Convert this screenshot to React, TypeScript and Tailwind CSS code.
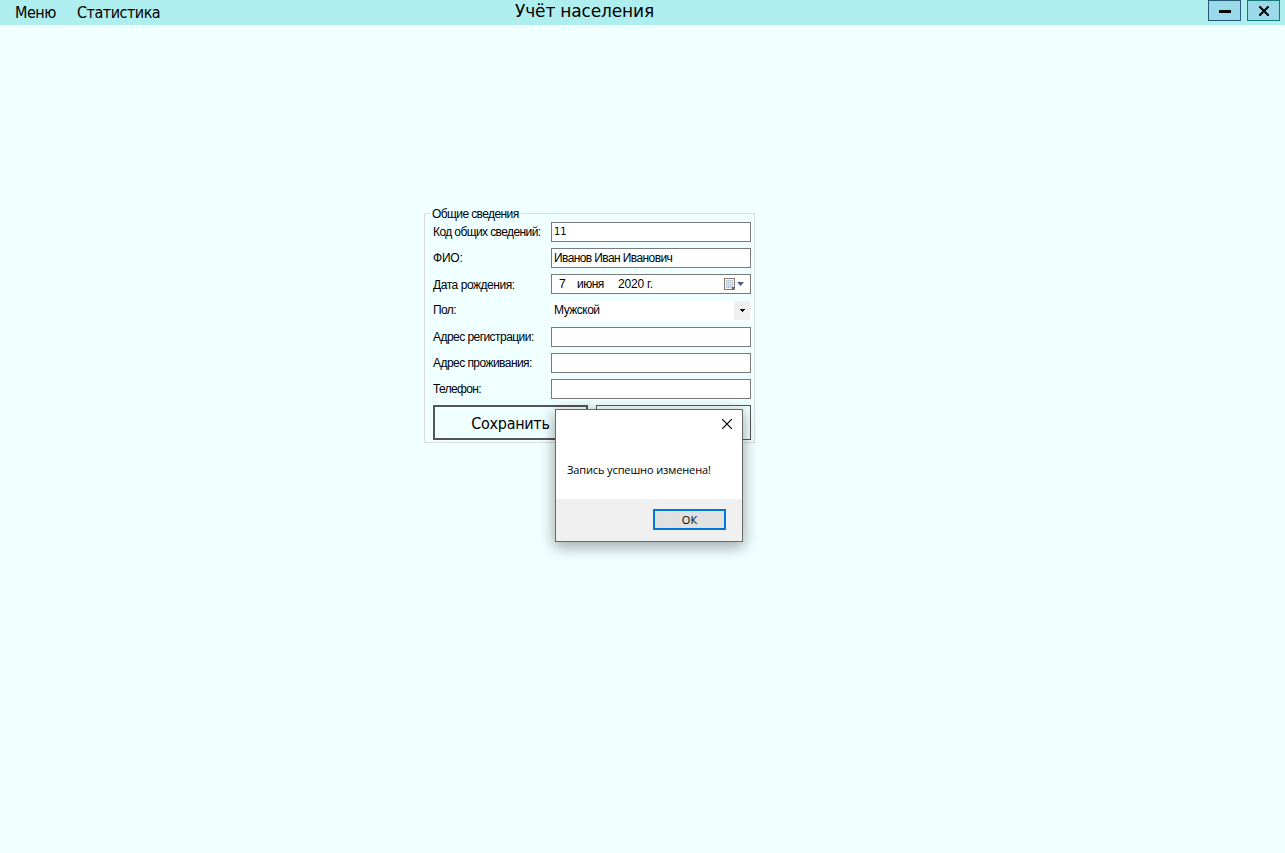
import type { ReactNode } from "react";

function Field({ label, labelClass, children }: { label: string; labelClass: string; children: ReactNode }) {
  return (
    <div className="flex h-[26px] items-center">
      <label className="flex w-[118px] shrink-0 whitespace-nowrap leading-[14px]">
        <span className={labelClass}>{label}</span>
      </label>
      {children}
    </div>
  );
}

function TextBox({ value = "", className = "" }: { value?: string; className?: string }) {
  return (
    <div className="flex h-5 w-[200px] items-center border border-[#7a7a7a] bg-white pl-[2px] leading-[14px] whitespace-nowrap">
      <span className={className}>{value}</span>
    </div>
  );
}

function CalendarIcon() {
  return (
    <svg width="12" height="13" viewBox="0 0 12 13" shapeRendering="crispEdges">
      <path d="M0 0h11v12H0z" fill="#857c79" />
      <path d="M1 1h9v10H1z" fill="#f6f6f6" />
      <path d="M2 2h7v8H2z" fill="#b4c0cc" />
      <path d="M2 3.5h7M2 5.5h7M2 7.5h7M3.5 2v8M5.5 2v8M7.5 2v8" stroke="#eef1f4" strokeWidth=".6" shapeRendering="auto" />
      <path d="M8 9h3v1h-1v1H9v1H8z" fill="#65605e" />
    </svg>
  );
}

function MessageDialog() {
  return (
    <div className="absolute left-[555px] top-[409px] flex h-[133px] w-[188px] flex-col border border-[#65696a] bg-white font-['Open_Sans',sans-serif] text-[11px] shadow-[0_4px_14px_1px_rgba(0,0,0,0.34)]">
      <div className="flex h-[29px] justify-end pr-[10px] pt-[9px]">
        <svg width="10" height="10" viewBox="0 0 10 10">
          <path d="M0 0l10 10M10 0L0 10" stroke="#000" strokeWidth="1.2" />
        </svg>
      </div>
      <div className="flex-1 pl-[11px] pt-[24px] leading-[14px] whitespace-nowrap">
        <span className="tracking-[-0.12px]">Запись успешно изменена!</span>
      </div>
      <div className="flex h-[42px] justify-end bg-[#f0f0f0] pr-4 pt-[10px]">
        <button className="h-[21px] w-[73px] border-2 border-[#0078d7] bg-[#e1e1e1] text-center leading-[17px]">ОК</button>
      </div>
    </div>
  );
}

export default function App() {
  return (
    <div className="relative h-[853px] w-[1285px] overflow-hidden bg-[#f0ffff] font-['Liberation_Sans',sans-serif] text-[12px] text-black">
      <header className="flex h-[25px] justify-between bg-[#afeeee]">
        <nav className="flex w-[515px] pl-[15px] pt-[3px] font-['DejaVu_Sans_Condensed','DejaVu_Sans',sans-serif] text-[16px] leading-5">
          <span className="w-[62px] tracking-[-0.5px]">Меню</span>
          <span className="tracking-[-0.5px]">Статистика</span>
        </nav>
        <h1 className="flex-1 whitespace-nowrap pt-px font-['DejaVu_Sans',sans-serif] text-[17px] leading-[21px] tracking-[-0.16px]">Учёт населения</h1>
        <div className="flex gap-[6px] pr-[5px]">
          <button className="flex h-[21px] w-[33px] items-start border border-[#285a78] bg-[#99d9ea] pl-[10px] pt-[9px]">
            <svg width="12" height="3" viewBox="0 0 12 3"><path d="M0 0h12v3H0z" /></svg>
          </button>
          <button className="flex h-[21px] w-[33px] items-start border border-[#147878] bg-[#99d9ea] pl-[11px] pt-[5px]">
            <svg width="10" height="10" viewBox="0 0 10 10"><path d="M1 1l8 8M9 1L1 9" stroke="#000" strokeWidth="2" strokeLinecap="square" /></svg>
          </button>
        </div>
      </header>

      <main className="flex justify-start pl-[424px] pt-[188px]">
        <section className="relative h-[230px] w-[331px] border border-[#dcdcdc] pl-2 pt-[5px]">
          <h2 className="absolute -top-[7px] left-[5px] bg-[#f0ffff] px-[2px] leading-[14px] tracking-[-0.6px] whitespace-nowrap">Общие сведения</h2>
          <Field label="Код общих сведений:" labelClass="tracking-[-0.6px]"><TextBox value="11" className="font-['DejaVu_Sans_Condensed','DejaVu_Sans',sans-serif] text-[11px]" /></Field>
          <Field label="ФИО:" labelClass="tracking-[-0.2px]"><TextBox value="Иванов Иван Иванович" className="tracking-[-0.6px]" /></Field>
          <Field label="Дата рождения:" labelClass="pt-[2px] tracking-[-0.45px]">
            <div className="flex h-5 w-[200px] items-center border border-[#7a7a7a] bg-white pl-[7px] pr-[6px] leading-[14px]">
              <span className="w-[18px]">7</span>
              <span className="w-[41px] tracking-[-0.5px]">июня</span>
              <span className="whitespace-nowrap tracking-[-0.2px]">2020 г.</span>
              <span className="ml-auto flex items-center gap-[1px]">
                <CalendarIcon />
                <svg width="7" height="4" viewBox="0 0 7 4"><path d="M0 0h7L3.5 4z" fill="#475d83" /></svg>
              </span>
            </div>
          </Field>
          <div className="mb-px">
            <Field label="Пол:" labelClass="tracking-[-0.6px]">
              <div className="mt-px flex h-5 w-[200px] items-center justify-between bg-white pl-[3px] pr-px leading-[14px]">
                <span className="-mt-px tracking-[-0.5px]">Мужской</span>
                <span className="flex h-[19px] w-4 items-center justify-center bg-[#f0f0f0]">
                  <svg width="5" height="3" viewBox="0 0 5 3" shapeRendering="crispEdges"><path d="M0 0h5v1H4v1H3v1H2V2H1V1H0z" /></svg>
                </span>
              </div>
            </Field>
          </div>
          <Field label="Адрес регистрации:" labelClass="tracking-[-0.55px]"><TextBox /></Field>
          <Field label="Адрес проживания:" labelClass="tracking-[-0.55px]"><TextBox /></Field>
          <Field label="Телефон:" labelClass="tracking-[-0.65px]"><TextBox /></Field>
          <div className="mt-[3px] flex gap-2">
            <button className="h-[35px] w-[155px] border-2 border-[#555] pt-px font-['DejaVu_Sans_Condensed','DejaVu_Sans',sans-serif] text-[16px] leading-[32px] tracking-[-0.3px]">Сохранить</button>
            <button className="h-[35px] w-[155px] border border-[#555]" />
          </div>
        </section>
      </main>
      <MessageDialog />
    </div>
  );
}
